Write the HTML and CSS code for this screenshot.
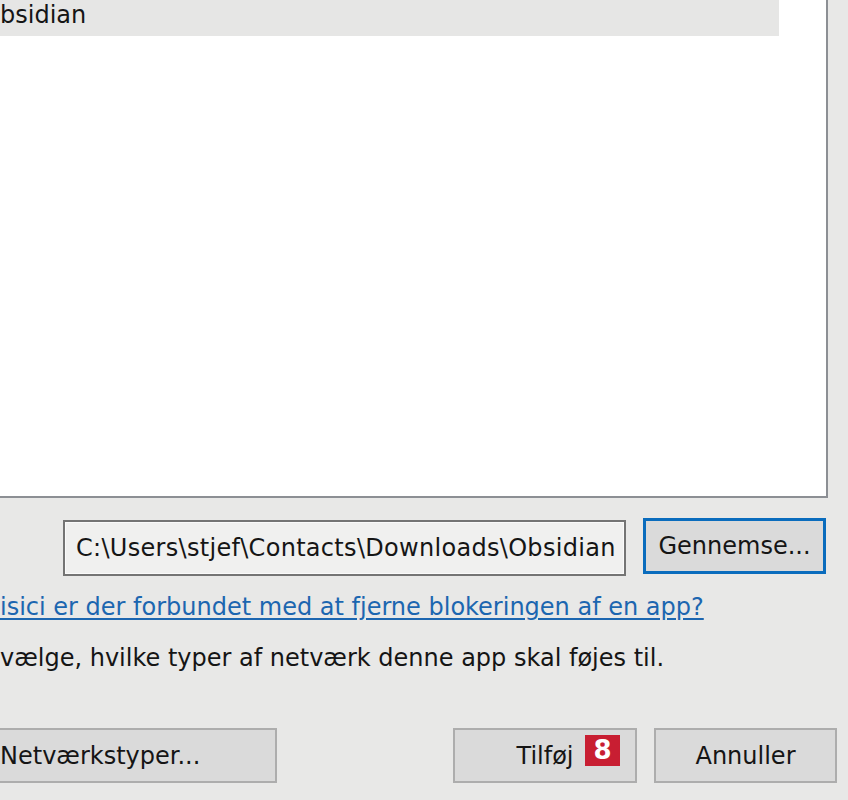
FILE: index.html
```html
<!DOCTYPE html>
<html lang="da">
<head>
    <meta charset="UTF-8">
    <meta name="viewport" content="width=device-width, initial-scale=1.0">
    <link rel="stylesheet" href="styles.css">
</head>
<body>

    <div class="dialog">
        <!-- Liste over apps -->
        <div class="app-list">
            <div class="app-item selected">bsidian</div>
        </div>

        <!-- Sti og gennemse -->
        <div class="path-row">
            <input type="text" class="path-field" value="C:\Users\stjef\Contacts\Downloads\Obsidian" readonly>
            <button class="btn btn-focus">Gennemse...</button>
        </div>

        <a class="risk-link" href="#">isici er der forbundet med at fjerne blokeringen af en app?</a>
        <p class="hint">vælge, hvilke typer af netværk denne app skal føjes til.</p>

        <!-- Knapper -->
        <div class="button-row">
            <button class="btn btn-types">Netværkstyper...</button>
            <div class="spacer"></div>
            <button class="btn btn-add">Tilføj<span class="step-badge">8</span></button>
            <button class="btn btn-cancel">Annuller</button>
        </div>
    </div>

</body>
</html>
```

FILE: styles.css
```css
body {
    margin: 0;
    padding: 0;
    background-color: #e8e8e7;
    font-family: "DejaVu Sans", sans-serif;
    font-size: 24px;
    color: #151515;
    overflow: hidden;
    height: 800px;
}

.dialog {
    width: 848px;
}

.app-list {
    width: 828px;
    height: 498px;
    background-color: #ffffff;
    border-right: 2px solid #8c8f94;
    border-bottom: 2px solid #8c8f94;
    box-sizing: border-box;
}

.app-item {
    width: 779px;
    height: 36px;
    line-height: 30px;
    box-sizing: border-box;
}

.app-item.selected {
    background-color: #e6e6e5;
}

.path-row {
    display: flex;
    align-items: flex-start;
    margin-top: 20px;
    padding-left: 63px;
}

.path-field {
    width: 563px;
    height: 56px;
    margin-top: 2px;
    padding: 0 0 0 11px;
    border: 2px solid #747474;
    box-shadow: inset 0 0 0 1px #fafafa;
    background-color: #f0f0ef;
    font-family: inherit;
    font-size: 24px;
    letter-spacing: 0.3px;
    color: #151515;
    box-sizing: border-box;
    outline: none;
}

.btn {
    height: 55px;
    border: 2px solid #adadad;
    background-color: #dadada;
    font-family: inherit;
    font-size: 24px;
    color: #151515;
    box-sizing: border-box;
    padding: 0;
}

.btn-focus {
    width: 183px;
    height: 56px;
    margin-left: 17px;
    border: 3px solid #0a6cbd;
}

.risk-link {
    display: block;
    margin-top: 16px;
    line-height: 30px;
    color: #1c66b0;
    text-decoration: underline;
    text-underline-offset: 3px;
    width: max-content;
}

.hint {
    margin: 21px 0 0 0;
    line-height: 30px;
}

.button-row {
    display: flex;
    margin-top: 55px;
}

.btn-types {
    width: 277px;
    text-align: left;
    padding-left: 0;
    border-left: none;
}

.spacer {
    width: 176px;
}

.btn-add {
    position: relative;
    width: 184px;
}

.btn-cancel {
    width: 183px;
    margin-left: 17px;
}

.step-badge {
    position: absolute;
    left: 130px;
    top: 5px;
    width: 35px;
    height: 31px;
    line-height: 31px;
    background-color: #c81e32;
    color: #ffffff;
    font-family: "DejaVu Sans", sans-serif;
    font-weight: bold;
    font-size: 26px;
    text-align: center;
}
```
